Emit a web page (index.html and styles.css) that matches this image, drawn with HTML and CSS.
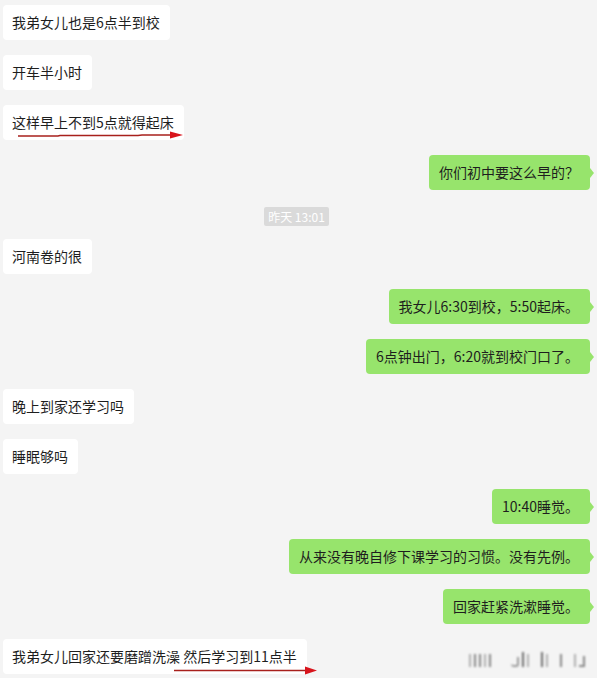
FILE: index.html
```html
<!DOCTYPE html>
<html lang="zh-CN">
<head>
    <meta charset="UTF-8">
    <title>聊天记录</title>
    <link rel="stylesheet" href="styles.css">
</head>
<body>
    <div class="chat">
        <div class="row left"><div class="bubble">我弟女儿也是6点半到校</div></div>
        <div class="row left"><div class="bubble">开车半小时</div></div>
        <div class="row left">
            <div class="bubble">这样早上不到5点就得起床
                <svg class="mark mark-one" width="166" height="8" viewBox="0 0 166 8">
                    <path d="M0 5 L40 5 L42 4.5 L120 4.5 L124 4 L154 4" stroke="#a8201c" stroke-width="1.3" fill="none"/>
                    <polygon points="152,0.5 165,4 152,7.5" fill="#d8141c"/>
                </svg>
            </div>
        </div>
        <div class="row right"><div class="bubble green">你们初中要这么早的？</div></div>

        <div class="time"><span>昨天 13:01</span></div>

        <div class="row left"><div class="bubble">河南卷的很</div></div>
        <div class="row right"><div class="bubble green">我女儿6:30到校，5:50起床。</div></div>
        <div class="row right"><div class="bubble green">6点钟出门，6:20就到校门口了。</div></div>
        <div class="row left"><div class="bubble">晚上到家还学习吗</div></div>
        <div class="row left"><div class="bubble">睡眠够吗</div></div>
        <div class="row right"><div class="bubble green">10:40睡觉。</div></div>
        <div class="row right"><div class="bubble green">从来没有晚自修下课学习的习惯。没有先例。</div></div>
        <div class="row right"><div class="bubble green">回家赶紧洗漱睡觉。</div></div>
        <div class="row left">
            <div class="bubble">我弟女儿回家还要磨蹭洗澡 然后学习到11点半
                <svg class="mark mark-two" width="144" height="9" viewBox="0 0 144 9">
                    <path d="M0 4.5 L132 4.5" stroke="#a8201c" stroke-width="1.3" fill="none"/>
                    <polygon points="131,0.5 143,4.5 131,8.5" fill="#d8141c"/>
                </svg>
            </div>
        </div>
    </div>

    <div class="watermark">
        <span class="b b2"></span><span class="b b1"></span><span class="b b1"></span><span class="b b2"></span><span class="b b1"></span>
        <span class="sp"></span>
        <span class="b hook"></span><span class="b b3"></span><span class="b b2"></span>
        <span class="sp small"></span>
        <span class="b b3"></span><span class="b b2"></span>
        <span class="sp small"></span>
        <span class="b b1"></span>
        <span class="sp small"></span>
        <span class="b b2"></span><span class="b hook2"></span>
    </div>
</body>
</html>
```

FILE: styles.css
```css
body {
    margin: 0;
    background-color: #f4f4f4;
    font-family: "Noto Sans CJK SC", "Microsoft YaHei", sans-serif;
    font-size: 14px;
    color: #1e1e1e;
    width: 597px;
    height: 678px;
    overflow: hidden;
    position: relative;
}
.chat {
    display: flex;
    flex-direction: column;
    gap: 15px;
    padding: 5px 7px 0 3px;
}
.row {
    display: flex;
}
.row.left {
    justify-content: flex-start;
}
.row.right {
    justify-content: flex-end;
}
.bubble {
    position: relative;
    background-color: #fff;
    border-radius: 4px;
    padding: 0 10px 0 9px;
    height: 35px;
    line-height: 35px;
    white-space: nowrap;
}
.bubble.green {
    background-color: #97e46c;
    padding: 0 11px 0 10px;
}
.bubble.green::after {
    content: "";
    position: absolute;
    right: -4px;
    top: 13px;
    border-top: 5px solid transparent;
    border-bottom: 5px solid transparent;
    border-left: 4px solid #97e46c;
}
.mark {
    position: absolute;
    display: block;
}
.mark-one {
    left: 15px;
    top: 26px;
}
.mark-two {
    left: 171px;
    top: 27px;
}
.time {
    display: flex;
    justify-content: center;
    margin: 2px 0 -2px;
}
.time span {
    background-color: #dadada;
    color: #fff;
    font-size: 12px;
    line-height: 19px;
    height: 19px;
    padding: 0 4px;
    border-radius: 2px;
}
.watermark {
    position: absolute;
    left: 469px;
    top: 650px;
    display: flex;
    align-items: flex-end;
    gap: 3px;
    height: 17px;
    filter: blur(0.8px);
}
.watermark .b {
    width: 2px;
    height: 13px;
    background-color: #b8b8b8;
}
.watermark .b1 {
    background-color: #8a8a8a;
}
.watermark .b2 {
    background-color: #b0b0b0;
}
.watermark .b3 {
    background-color: #6e6e6e;
    height: 15px;
}
.watermark .hook {
    width: 6px;
    height: 8px;
    background-color: transparent;
    border-bottom: 2px solid #9a9a9a;
    border-right: 2px solid #9a9a9a;
    border-radius: 0 0 3px 3px;
}
.watermark .hook2 {
    width: 4px;
    height: 9px;
    background-color: transparent;
    border-bottom: 2px solid #8a8a8a;
    border-right: 2px solid #8a8a8a;
}
.watermark .sp {
    width: 14px;
}
.watermark .sp.small {
    width: 6px;
}
```
